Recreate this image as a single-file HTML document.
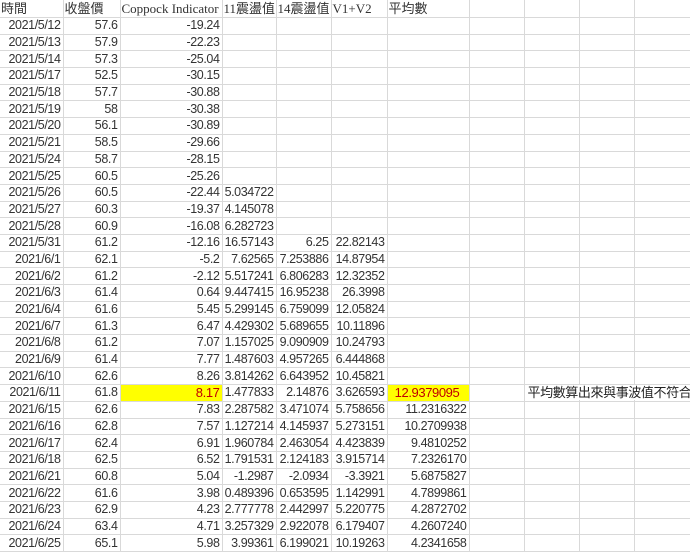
<!DOCTYPE html><html><head><meta charset="utf-8"><style>
body{margin:0;width:690px;height:555px;overflow:hidden;background:#fff;font-family:"Liberation Sans","Noto Sans CJK TC",sans-serif;font-size:12.5px;color:#333}
table{border-collapse:collapse;table-layout:fixed;width:690px}
td{border-right:1px solid #d9d9d9;border-bottom:1px solid #d9d9d9;height:15.7px;padding:0 2px 0 0;text-align:right;white-space:nowrap;overflow:visible;line-height:15px;letter-spacing:-0.4px}
tr.h td{height:17px;text-align:left;padding-left:1px;font-family:"Liberation Serif","Noto Sans CJK TC",serif;font-size:13px;letter-spacing:0}
td.y{background:#ffff00;color:#c00000;font-size:13px}
td.n{position:relative}
td.n span{position:absolute;left:3px;top:0;background:#fff;padding-right:4px;font-family:"Liberation Sans","Noto Sans CJK TC",sans-serif;font-size:13px;z-index:2;color:#222}
</style></head><body><table>
<colgroup><col style="width:63px"><col style="width:57px"><col style="width:102px"><col style="width:54px"><col style="width:55px"><col style="width:56px"><col style="width:82px"><col style="width:55px"><col style="width:55px"><col style="width:55px"><col style="width:56px"></colgroup>
<tr class="h"><td>時間</td><td>收盤價</td><td>Coppock Indicator</td><td>11震盪值</td><td>14震盪值</td><td>V1+V2</td><td>平均數</td><td></td><td></td><td></td><td></td></tr>
<tr><td>2021/5/12</td><td>57.6</td><td>-19.24</td><td></td><td></td><td></td><td></td><td></td><td></td><td></td><td></td></tr>
<tr><td>2021/5/13</td><td>57.9</td><td>-22.23</td><td></td><td></td><td></td><td></td><td></td><td></td><td></td><td></td></tr>
<tr><td>2021/5/14</td><td>57.3</td><td>-25.04</td><td></td><td></td><td></td><td></td><td></td><td></td><td></td><td></td></tr>
<tr><td>2021/5/17</td><td>52.5</td><td>-30.15</td><td></td><td></td><td></td><td></td><td></td><td></td><td></td><td></td></tr>
<tr><td>2021/5/18</td><td>57.7</td><td>-30.88</td><td></td><td></td><td></td><td></td><td></td><td></td><td></td><td></td></tr>
<tr><td>2021/5/19</td><td>58</td><td>-30.38</td><td></td><td></td><td></td><td></td><td></td><td></td><td></td><td></td></tr>
<tr><td>2021/5/20</td><td>56.1</td><td>-30.89</td><td></td><td></td><td></td><td></td><td></td><td></td><td></td><td></td></tr>
<tr><td>2021/5/21</td><td>58.5</td><td>-29.66</td><td></td><td></td><td></td><td></td><td></td><td></td><td></td><td></td></tr>
<tr><td>2021/5/24</td><td>58.7</td><td>-28.15</td><td></td><td></td><td></td><td></td><td></td><td></td><td></td><td></td></tr>
<tr><td>2021/5/25</td><td>60.5</td><td>-25.26</td><td></td><td></td><td></td><td></td><td></td><td></td><td></td><td></td></tr>
<tr><td>2021/5/26</td><td>60.5</td><td>-22.44</td><td>5.034722</td><td></td><td></td><td></td><td></td><td></td><td></td><td></td></tr>
<tr><td>2021/5/27</td><td>60.3</td><td>-19.37</td><td>4.145078</td><td></td><td></td><td></td><td></td><td></td><td></td><td></td></tr>
<tr><td>2021/5/28</td><td>60.9</td><td>-16.08</td><td>6.282723</td><td></td><td></td><td></td><td></td><td></td><td></td><td></td></tr>
<tr><td>2021/5/31</td><td>61.2</td><td>-12.16</td><td>16.57143</td><td>6.25</td><td>22.82143</td><td></td><td></td><td></td><td></td><td></td></tr>
<tr><td>2021/6/1</td><td>62.1</td><td>-5.2</td><td>7.62565</td><td>7.253886</td><td>14.87954</td><td></td><td></td><td></td><td></td><td></td></tr>
<tr><td>2021/6/2</td><td>61.2</td><td>-2.12</td><td>5.517241</td><td>6.806283</td><td>12.32352</td><td></td><td></td><td></td><td></td><td></td></tr>
<tr><td>2021/6/3</td><td>61.4</td><td>0.64</td><td>9.447415</td><td>16.95238</td><td>26.3998</td><td></td><td></td><td></td><td></td><td></td></tr>
<tr><td>2021/6/4</td><td>61.6</td><td>5.45</td><td>5.299145</td><td>6.759099</td><td>12.05824</td><td></td><td></td><td></td><td></td><td></td></tr>
<tr><td>2021/6/7</td><td>61.3</td><td>6.47</td><td>4.429302</td><td>5.689655</td><td>10.11896</td><td></td><td></td><td></td><td></td><td></td></tr>
<tr><td>2021/6/8</td><td>61.2</td><td>7.07</td><td>1.157025</td><td>9.090909</td><td>10.24793</td><td></td><td></td><td></td><td></td><td></td></tr>
<tr><td>2021/6/9</td><td>61.4</td><td>7.77</td><td>1.487603</td><td>4.957265</td><td>6.444868</td><td></td><td></td><td></td><td></td><td></td></tr>
<tr><td>2021/6/10</td><td>62.6</td><td>8.26</td><td>3.814262</td><td>6.643952</td><td>10.45821</td><td></td><td></td><td></td><td></td><td></td></tr>
<tr><td>2021/6/11</td><td>61.8</td><td class="y">8.17</td><td>1.477833</td><td>2.14876</td><td>3.626593</td><td class="y" style="text-align:center">12.9379095</td><td></td><td class="n"><span>平均數算出來與事波值不符合</span></td><td></td><td></td></tr>
<tr><td>2021/6/15</td><td>62.6</td><td>7.83</td><td>2.287582</td><td>3.471074</td><td>5.758656</td><td>11.2316322</td><td></td><td></td><td></td><td></td></tr>
<tr><td>2021/6/16</td><td>62.8</td><td>7.57</td><td>1.127214</td><td>4.145937</td><td>5.273151</td><td>10.2709938</td><td></td><td></td><td></td><td></td></tr>
<tr><td>2021/6/17</td><td>62.4</td><td>6.91</td><td>1.960784</td><td>2.463054</td><td>4.423839</td><td>9.4810252</td><td></td><td></td><td></td><td></td></tr>
<tr><td>2021/6/18</td><td>62.5</td><td>6.52</td><td>1.791531</td><td>2.124183</td><td>3.915714</td><td>7.2326170</td><td></td><td></td><td></td><td></td></tr>
<tr><td>2021/6/21</td><td>60.8</td><td>5.04</td><td>-1.2987</td><td>-2.0934</td><td>-3.3921</td><td>5.6875827</td><td></td><td></td><td></td><td></td></tr>
<tr><td>2021/6/22</td><td>61.6</td><td>3.98</td><td>0.489396</td><td>0.653595</td><td>1.142991</td><td>4.7899861</td><td></td><td></td><td></td><td></td></tr>
<tr><td>2021/6/23</td><td>62.9</td><td>4.23</td><td>2.777778</td><td>2.442997</td><td>5.220775</td><td>4.2872702</td><td></td><td></td><td></td><td></td></tr>
<tr><td>2021/6/24</td><td>63.4</td><td>4.71</td><td>3.257329</td><td>2.922078</td><td>6.179407</td><td>4.2607240</td><td></td><td></td><td></td><td></td></tr>
<tr><td>2021/6/25</td><td>65.1</td><td>5.98</td><td>3.99361</td><td>6.199021</td><td>10.19263</td><td>4.2341658</td><td></td><td></td><td></td><td></td></tr>
</table></body></html>
